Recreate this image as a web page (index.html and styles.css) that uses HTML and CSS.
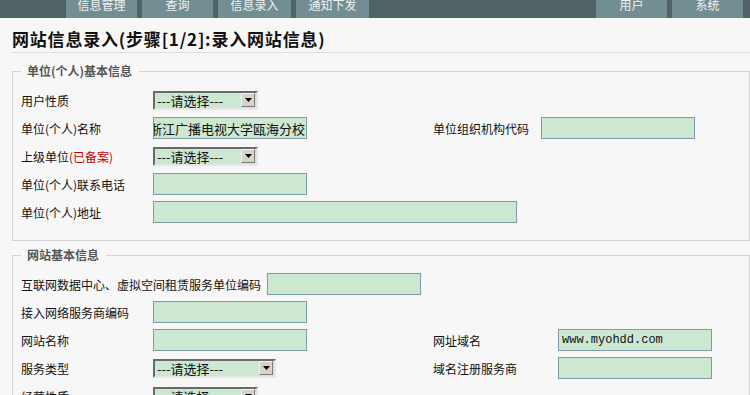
FILE: index.html
```html
<!DOCTYPE html>
<html lang="zh-CN">
<head>
<meta charset="utf-8">
<title>网站信息录入</title>
<link rel="stylesheet" href="styles.css">
</head>
<body>
<div class="topbar">
  <div class="tabs tabs-left">
    <span class="tab">信息管理</span>
    <span class="tab">查询</span>
    <span class="tab tab-wide">信息录入</span>
    <span class="tab tab-wide">通知下发</span>
  </div>
  <div class="tabs tabs-right">
    <span class="tab">用户</span>
    <span class="tab">系统</span>
  </div>
</div>

<h1 class="title">网站信息录入(步骤[1/2]:录入网站信息)</h1>

<fieldset class="group group-unit">
  <legend>单位(个人)基本信息</legend>
  <div class="row">
    <span class="label">用户性质</span>
    <span class="cell"><span class="select"><span class="select-text">---请选择---</span><span class="arrow"><svg width="7" height="4" viewBox="0 0 7 4"><polygon points="0,0 7,0 3.5,4" fill="#000"/></svg></span></span></span>
  </div>
  <div class="row">
    <span class="label">单位(个人)名称</span>
    <span class="cell"><span class="input input-scroll"><span>浙江广播电视大学瓯海分校</span></span></span>
    <span class="label label-right">单位组织机构代码</span>
    <span class="cell"><span class="input"></span></span>
  </div>
  <div class="row">
    <span class="label">上级单位<span class="note">(已备案)</span></span>
    <span class="cell"><span class="select"><span class="select-text">---请选择---</span><span class="arrow"><svg width="7" height="4" viewBox="0 0 7 4"><polygon points="0,0 7,0 3.5,4" fill="#000"/></svg></span></span></span>
  </div>
  <div class="row">
    <span class="label">单位(个人)联系电话</span>
    <span class="cell"><span class="input"></span></span>
  </div>
  <div class="row">
    <span class="label">单位(个人)地址</span>
    <span class="cell"><span class="input input-long"></span></span>
  </div>
</fieldset>

<fieldset class="group group-site">
  <legend>网站基本信息</legend>
  <div class="row">
    <span class="label label-auto">互联网数据中心、虚拟空间租赁服务单位编码</span>
    <span class="input"></span>
  </div>
  <div class="row">
    <span class="label">接入网络服务商编码</span>
    <span class="cell"><span class="input"></span></span>
  </div>
  <div class="row">
    <span class="label">网站名称</span>
    <span class="cell"><span class="input"></span></span>
    <span class="label label-right">网址域名</span>
    <span class="cell"><span class="input input-mono">www.myohdd.com</span></span>
  </div>
  <div class="row">
    <span class="label">服务类型</span>
    <span class="cell"><span class="select select-wide"><span class="select-text">---请选择---</span><span class="arrow"><svg width="7" height="4" viewBox="0 0 7 4"><polygon points="0,0 7,0 3.5,4" fill="#000"/></svg></span></span></span>
    <span class="label label-right">域名注册服务商</span>
    <span class="cell"><span class="input"></span></span>
  </div>
  <div class="row">
    <span class="label">经营性质</span>
    <span class="cell"><span class="select"><span class="select-text">---请选择---</span><span class="arrow"><svg width="7" height="4" viewBox="0 0 7 4"><polygon points="0,0 7,0 3.5,4" fill="#000"/></svg></span></span></span>
  </div>
</fieldset>
</body>
</html>
```

FILE: styles.css
```css
html {
  overflow: hidden;
}

body {
  margin: 0;
  background: #f7f7f7;
  color: #111;
  font-family: "Noto Sans CJK SC", "Noto Sans", sans-serif;
  font-size: 12px;
}

.topbar {
  height: 18px;
  background: #4f6266;
  display: flex;
  justify-content: space-between;
  padding: 0 7px 0 66px;
}

.tabs {
  display: flex;
  gap: 5px;
}

.tab {
  width: 71px;
  height: 18px;
  background: #738e92;
  color: #eef3f3;
  text-align: center;
  line-height: 9px;
  overflow: hidden;
  font-size: 12px;
}

.tab-wide {
  width: 73px;
}

.title {
  margin: 0 0 0 12px;
  padding: 11px 0 4px;
  height: 19px;
  line-height: 19px;
  font-size: 17px;
  letter-spacing: 0.8px;
  font-weight: bold;
  color: #111;
  border-bottom: 1px solid #dcdcdc;
}

.group {
  margin: 10px 0 0 12px;
  padding: 7px 8px 14px;
  border: 1px solid #d2d2d2;
  min-width: 0;
}

.group-site {
  margin-top: 6px;
}

.group legend {
  padding: 0 7px 0 6px;
  font-weight: bold;
  color: #555;
  line-height: 16px;
  font-size: 12px;
}

.row {
  display: flex;
  align-items: center;
  height: 28px;
}

.label {
  width: 132px;
  flex: none;
  white-space: nowrap;
  color: #111;
}

.label-auto {
  width: auto;
  margin-right: 6px;
}

.note {
  color: #c00000;
}

.cell {
  width: 280px;
  flex: none;
  display: flex;
  align-items: center;
}

.label-right {
  width: 108px;
}

.group-site .label-right {
  width: 125px;
}

.input {
  box-sizing: border-box;
  width: 154px;
  height: 22px;
  flex: none;
  background: #cde8d0;
  border: 1px solid #7e9ca6;
  display: flex;
  align-items: center;
  padding: 0 3px;
  font-size: 13px;
  color: #111;
  white-space: nowrap;
  overflow: hidden;
}

.input-scroll {
  justify-content: flex-end;
  padding: 0 1px 0 0;
}

.input-scroll span {
  flex: none;
}

.input-long {
  width: 364px;
}

.input-mono {
  font-family: "Liberation Mono", "DejaVu Sans Mono", monospace;
  font-size: 12px;
}

.select {
  box-sizing: border-box;
  width: 105px;
  height: 19px;
  display: flex;
  align-items: center;
  justify-content: space-between;
  background: #cde8d0;
  border: 2px solid;
  border-color: #6a6a6a #e6e6e6 #e6e6e6 #6a6a6a;
  padding: 0 1px 0 2px;
}

.select-wide {
  width: 123px;
}

.select-text {
  font-size: 13px;
  line-height: 15px;
  color: #111;
  white-space: nowrap;
}

.arrow {
  box-sizing: border-box;
  width: 14px;
  height: 14px;
  flex: none;
  background: #d6d3cd;
  border: 1px solid;
  border-color: #f4f4f4 #7a7a7a #7a7a7a #f4f4f4;
  display: flex;
  align-items: center;
  justify-content: center;
}

.arrow svg {
  display: block;
}
```
